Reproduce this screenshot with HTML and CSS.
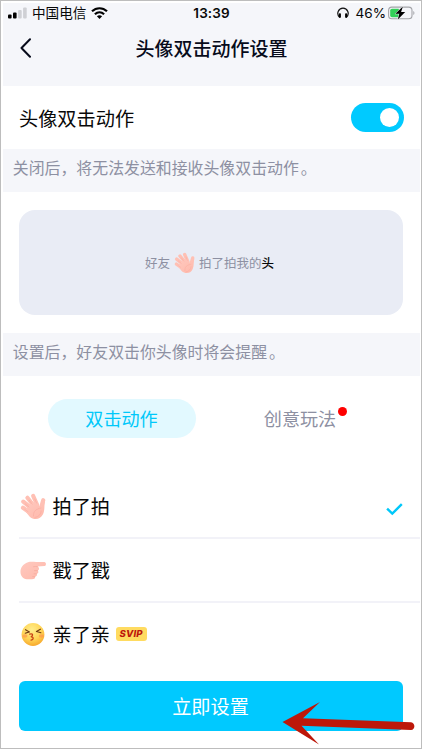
FILE: index.html
```html
<!DOCTYPE html>
<html lang="zh-CN">
<head>
<meta charset="utf-8">
<title>头像双击动作设置</title>
<link rel="stylesheet" href="styles.css">
</head>
<body>
<svg class="defs" width="0" height="0" aria-hidden="true">
  <defs>
    <linearGradient id="skin" x1="0" y1="0" x2="1" y2="1"><stop offset="0" stop-color="#ffc9bf"/><stop offset="1" stop-color="#ffb8aa"/></linearGradient>
    <radialGradient id="face" cx=".45" cy=".3" r=".7"><stop offset="0" stop-color="#ffed8d"/><stop offset=".6" stop-color="#ffd556"/><stop offset="1" stop-color="#f7a92d"/></radialGradient>
    <symbol id="wave" viewBox="0 0 26 27">
      <g fill="none" stroke="#ffc0b4" stroke-linecap="round" stroke-width="4.2">
        <path d="M3 14.8 9 19"/><path d="M3.3 8.7 11 15"/><path d="M7.4 4.8 14 13"/><path d="M13.2 3 17.2 12"/><path d="M23.2 7.2 20.7 16"/>
      </g>
      <path d="M8 13.5 12 9.8 17 8.6 19.3 13.5 22 9.5 25 8.4C24 13 25 17 23 21.2 20.4 26.7 14 27.5 9.5 23.4L4.5 17.2Z" fill="url(#skin)"/>
      <path d="M5.2 10.8 9 14M9.2 7.2l3 4M14.8 6l1.8 4.1M5 16.6l3 2M13.5 23c-.4-4.7 2.3-7 7.5-8M15 24.4c3.8-.3 6-3.4 6.2-6.4" fill="none" stroke="#f9aa9d" stroke-width=".6" stroke-linecap="round"/>
    </symbol>
  </defs>
</svg>
<main class="screen">
  <header class="top">
    <div class="status">
      <div class="status-left">
        <svg class="signal" width="19" height="12" viewBox="0 0 19 12"><rect y="7.5" width="3.6" height="4" rx="1"/><rect x="5" y="5.5" width="3.6" height="6" rx="1"/><g fill="#cfd0d4"><rect x="10.1" y="3" width="3.6" height="8.5" rx="1"/><rect x="15.1" y=".5" width="3.6" height="11" rx="1"/></g></svg>
        <span class="carrier">中国电信</span>
        <svg class="wifi" width="17" height="12" viewBox="0 0 17 12"><g fill="none" stroke="#000" stroke-width="2.2"><path d="M1 4.3C5.3.2 11.7.2 16 4.3"/><path d="M3.9 7.3c2.7-2.5 6.5-2.5 9.2 0"/></g><path d="M5.9 9.2c1.5-1.3 3.7-1.3 5.2 0L8.5 12z"/></svg>
      </div>
      <time class="clock">13:39</time>
      <div class="status-right">
        <svg class="headphones" width="12" height="12" viewBox="0 0 12 12"><path d="M2.6 10.2C.7 8.6.6 5.9 1.3 4.2 3 0 9 0 10.7 4.2c.7 1.7.6 4.4-1.3 6" fill="none" stroke="#111" stroke-width="1.2"/><rect x="1.9" y="6.2" width="2" height="4.7" rx=".8"/><rect x="8.1" y="6.2" width="2" height="4.7" rx=".8"/></svg>
        <span class="percent">46%</span>
        <svg class="battery" width="27" height="14" viewBox="0 0 27 14"><rect x=".6" y="1.1" width="23.4" height="11.6" rx="3.3" fill="none" stroke="#a3a4a8" stroke-width="1.1"/><path d="M25.3 5v4c1.5-.6 1.5-3.4 0-4" fill="#a3a4a8"/><path d="M4 2.7h6.8v8.5H4Q2.2 11.2 2.2 9.5V4.4Q2.2 2.7 4 2.7" fill="#32d058"/><path d="M14.9.5 7.3 7.8h4L9.8 13.5l7.4-7.5h-4.1z" stroke="#f5f6fa" stroke-width=".9" paint-order="stroke"/></svg>
      </div>
    </div>
    <nav class="navbar">
      <svg class="back" width="12" height="20" viewBox="0 0 12 20"><path d="M10 1.2 1.5 10 10 18.8" fill="none" stroke="#070b1b" stroke-width="2" stroke-linecap="round" stroke-linejoin="round"/></svg>
      <h1 class="title">头像双击动作设置</h1>
    </nav>
  </header>
  <section class="setting"><span>头像双击动作</span><span class="switch"><i class="knob"></i></span></section>
  <p class="note">关闭后，将无法发送和接收头像双击动作<span class="stop">。</span></p>
  <section class="preview"><div class="card"><span>好友</span><svg class="card-hand" width="21" height="22"><use href="#wave"/></svg><span>拍了拍我的<b>头</b></span></div></section>
  <p class="note">设置后，好友双击你头像时将会提醒<span class="stop">。</span></p>
  <div class="tabs"><span class="tab active">双击动作</span><span class="tab plain">创意玩法<i class="dot"></i></span></div>
  <ul class="list">
    <li class="item"><svg class="emoji" width="26" height="27"><use href="#wave"/></svg><span>拍了拍</span><svg class="check" width="17" height="13" viewBox="0 0 17 13"><path d="M1.1 5.6 6.3 10.6 15.8 1.2" fill="none" stroke="#00c8fa" stroke-width="2.4"/></svg></li>
    <li class="item"><svg class="emoji" width="26" height="27" viewBox="0 0 26 27"><path d="M8 5.3C10 4.5 14 5 17 4.9H24.3c2.2 0 2.2 4.1 0 4.2L17.5 9.5c2.1.9 2 3.5.2 4 1.2 1.2.6 3-1 3.3.7 1.3-.1 2.6-1.5 2.7.1 1.9-1.2 2.7-3.2 2.7H6.8C-1.2 22-2.5 8.5 8 5.3" fill="url(#skin)"/><path d="M13.5 9.7c1.2-.3 2.5-.2 4 0M14.5 13.6h3M14 16.8h2.5M12.7 19.6h2.2" fill="none" stroke="#f7a99c" stroke-width=".7" stroke-linecap="round"/></svg><span>戳了戳</span></li>
    <li class="item"><svg class="emoji" width="26" height="27" viewBox="0 0 26 27"><circle cx="13" cy="13.5" r="11.4" fill="url(#face)"/><ellipse cx="4.9" cy="15" rx="2.6" ry="1.7" fill="#ff934c" opacity=".65"/><ellipse cx="21.4" cy="15" rx="2.6" ry="1.7" fill="#ff934c" opacity=".65"/><path d="m5.5 8.7 3.9 2.2-4.2 1.3M20.4 8.2 16.4 10.5l4.5 1.3" fill="none" stroke="#713a16" stroke-width="1.1" stroke-linecap="round" stroke-linejoin="round"/><path d="M9.7 13.2c3.2-1 4 1.2 1.2 2.7 3.2-.1 2.8 2.8.2 3.3" fill="none" stroke="#c94516" stroke-width="1.3" stroke-linecap="round"/></svg><span>亲了亲</span><em class="svip">SVIP</em></li>
  </ul>
  <footer class="action"><button class="apply">立即设置</button></footer>
  <svg class="arrow" width="134" height="44" viewBox="0 0 134 44"><path d="M1.5 21 39 1 22 17.2 130 21.3c4.5.6 4.5 7.4 0 7.8L20.5 24.8 38 43.5Z" fill="#bd180a"/></svg>
</main>
</body>
</html>
```
FILE: styles.css
```css
* { box-sizing: border-box; }

body {
  margin: 0;
  background: #fff;
  color: #080808;
  font-family: "Noto Sans CJK SC", sans-serif;
}

.defs { position: absolute; }

.screen {
  position: relative;
  width: 422px;
  height: 749px;
  padding: 2px 1px 0 2px;
  border: 1px solid #bdbdbd;
  overflow: hidden;
}

.top { height: 83px; background: #f5f6fa; }

.status {
  display: grid;
  grid-template-columns: 1fr auto 1fr;
  align-items: center;
  height: 20px;
  padding: 0 5px;
}

.status-left, .status-right { display: flex; align-items: center; }
.status-left { gap: 5px; }
.status-right { justify-content: flex-end; }
.carrier { margin-bottom: 2px; font-size: 13.6px; line-height: 18px; }
.clock { font: 600 13.5px/20px Inter, sans-serif; letter-spacing: .1px; }
.percent { margin: 0 2px 0 6px; font: 13.6px/20px Inter, sans-serif; }

.navbar {
  display: grid;
  grid-template-columns: 40px 1fr 40px;
  align-items: center;
  height: 50px;
  padding-left: 17px;
  padding-right: 17px;
}

.title {
  margin: 0;
  color: #070b1b;
  font-size: 19px;
  font-weight: 500;
  line-height: 28px;
  text-align: center;
}

.setting {
  display: flex;
  align-items: center;
  justify-content: space-between;
  height: 63px;
  padding: 0 16.5px 0 16px;
  font-size: 19.2px;
}

.switch {
  display: flex;
  align-items: center;
  justify-content: flex-end;
  width: 53px;
  height: 29px;
  padding-right: 5px;
  border-radius: 15px;
  background: #00caff;
}

.knob { width: 19px; height: 19px; border-radius: 50%; background: #fff; }

.note {
  height: 43px;
  margin: 0;
  padding: 0 9.8px;
  background: #f5f6fa;
  color: #8d90a2;
  font-size: 15.9px;
  line-height: 38px;
}

.stop { margin-left: 2px; }

.preview { height: 141px; padding: 18px 17px 0 16px; }

.card {
  display: flex;
  align-items: center;
  justify-content: center;
  height: 105px;
  padding-right: 3px;
  border-radius: 16px;
  background: #e9ecf5;
  color: #8d90a2;
  font-size: 12.5px;
}

.card-hand { margin: 0 4px 0 4px; }
.card b { color: #080808; font-weight: 500; }

.tabs { display: flex; gap: 30px; height: 99px; padding: 23px 45px 0; }

.tab {
  position: relative;
  width: 148px;
  height: 39px;
  padding-right: 1px;
  border-radius: 20px;
  color: #8d90a2;
  font-size: 18.1px;
  line-height: 38px;
  text-align: center;
}

.tab.active { background: #e2f9ff; color: #00c8fa; }
.tab.plain { padding-right: 0; }

.dot {
  position: absolute;
  top: 8px;
  right: 27.5px;
  width: 9px;
  height: 9px;
  border-radius: 50%;
  background: #f00;
}

.list { height: 192px; margin: 0; padding: 0 0 0 16px; list-style: none; }

.item {
  display: flex;
  align-items: center;
  height: 64px;
  border-bottom: 2px solid #f2f2f8;
  font-size: 19.2px;
}

.item:last-child { border-bottom-color: transparent; }
.emoji { margin: 0 6.5px 0 1px; }
.check { margin: 6px 17px 0 auto; }

.svip {
  width: 31px;
  height: 14px;
  margin-left: 5.5px;
  border-radius: 3px;
  background: #ffdb60;
  color: #bd170c;
  font: italic 800 9.5px/14px Inter, sans-serif;
  letter-spacing: .2px;
  text-align: center;
}

.action { padding: 14px 17px 0 16px; }

.apply {
  display: block;
  width: 100%;
  height: 50px;
  padding: 0 1px 0 0;
  border: 0;
  border-radius: 6px;
  background: #00c9ff;
  color: #fff;
  font: 19.2px/50px "Noto Sans CJK SC", sans-serif;
}

.arrow { position: absolute; left: 280px; top: 700px; }
```
